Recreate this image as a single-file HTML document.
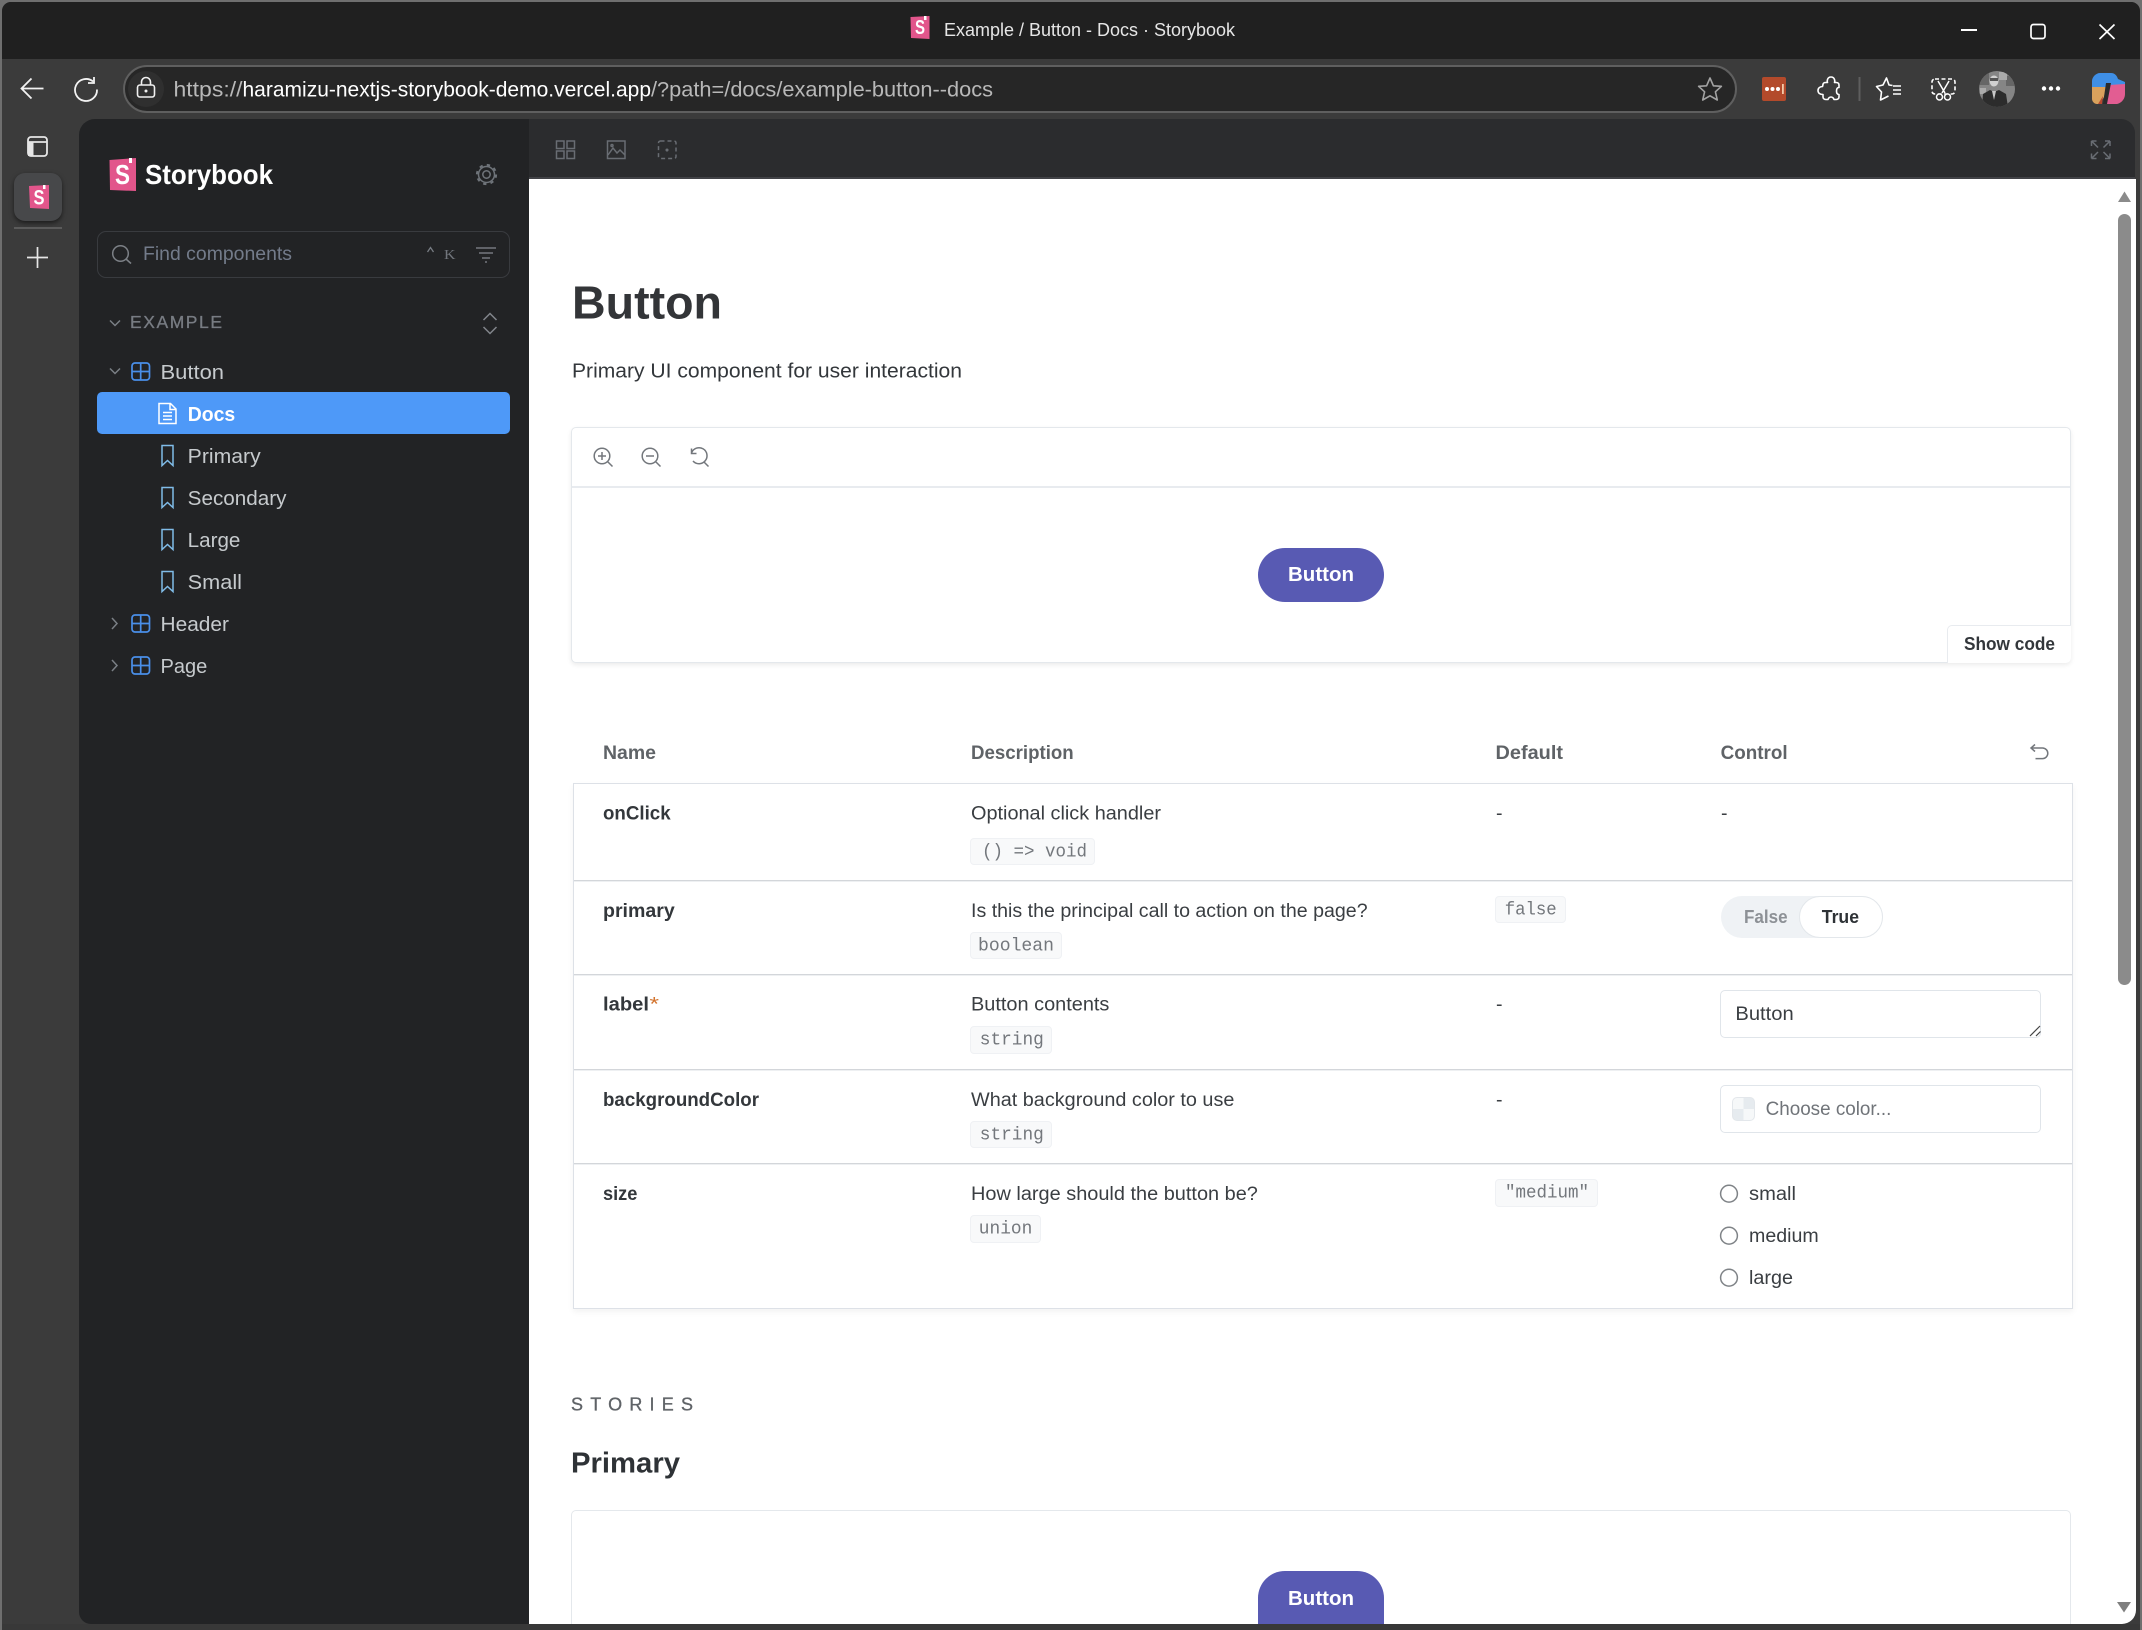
<!DOCTYPE html>
<html lang="en"><head><meta charset="utf-8"><title>Example / Button - Docs · Storybook</title>
<style>
html,body{margin:0;padding:0;width:2142px;height:1630px;overflow:hidden;background:#6f6f6f}
.a{position:absolute;box-sizing:border-box}
svg{position:absolute;left:0;top:0}
text{font-family:"Liberation Sans",sans-serif;white-space:pre}
.m{font-family:"Liberation Mono",monospace;font-size:18px;fill:#73777c}
.b{font-weight:700}
.d{font-size:19px;fill:#3a3e42}
.n{font-size:19px;font-weight:700;fill:#33373b}
.h{font-size:19px;font-weight:700;fill:#5f6367}
.s{font-size:20px;fill:#c6cacd}
.code{background:#f8f9fa;border:1px solid #eff1f4;border-radius:4px}
.inp{background:#fff;border:1.5px solid #e0e5ea;border-radius:5px}
.rl{left:574px;width:1498px;height:1px;background:#d3d6da;box-shadow:0 1px 0 #eef0f2}
</style></head><body>
<div class="a" style="left:2px;top:2px;width:2138px;height:1628px;background:#383838;border-radius:9px 9px 0 0"></div>
<div class="a" style="left:2px;top:2px;width:2138px;height:57px;background:#202020;border-radius:9px 9px 0 0"></div>
<div class="a" style="left:2px;top:59px;width:2138px;height:1565px;background:#3b3b3b"></div>
<div class="a" style="left:123px;top:65px;width:1614px;height:48px;background:#262626;border:2px solid #5f5f5f;border-radius:24px"></div>
<div class="a" style="left:128px;top:71px;width:36px;height:36px;background:#2f2f2f;border-radius:18px"></div>
<div class="a" style="left:14px;top:173px;width:48px;height:48px;background:#47484a;border-radius:11px;box-shadow:0 2px 5px rgba(0,0,0,.55)"></div>
<div class="a" style="left:14px;top:227px;width:48px;height:2px;background:#5b5b5b"></div>
<div class="a" style="left:79px;top:119px;width:450px;height:1505px;background:#222325;border-radius:16px 0 0 12px"></div>
<div class="a" style="left:529px;top:119px;width:1606px;height:60px;background:#2b2c2e;border-radius:0 14px 0 0;border-bottom:2px solid #414246"></div>
<div class="a" style="left:529px;top:179px;width:1607px;height:1445px;background:#fff;border-radius:0 0 14px 0;overflow:hidden"></div>
<div class="a" style="left:97px;top:231px;width:413px;height:47px;border:1.5px solid #393b3f;border-radius:9px"></div>
<div class="a" style="left:97px;top:392px;width:413px;height:42px;background:#4e99f8;border-radius:5px"></div>
<div class="a" style="left:571px;top:427px;width:1500px;height:236px;border:1.5px solid #e4e8ec;border-radius:5px;background:#fff;box-shadow:0 2px 5px rgba(0,0,0,.08)"></div>
<div class="a" style="left:572px;top:486px;width:1498px;height:2px;background:#e8ebef"></div>
<div class="a" style="left:1258px;top:548px;width:126px;height:54px;background:#585ab3;border-radius:27px"></div>
<div class="a" style="left:1947px;top:625px;width:124px;height:38px;border:1.5px solid #e8ebef;border-right:0;border-bottom:0;border-radius:5px 0 5px 0;background:#fff"></div>
<div class="a" style="left:573px;top:783px;width:1500px;height:526px;background:#fff;border:1.5px solid #dde1e7;box-shadow:0 3px 6px rgba(0,0,0,.05)"></div>
<div class="a rl" style="top:880px"></div>
<div class="a rl" style="top:974px"></div>
<div class="a rl" style="top:1069px"></div>
<div class="a rl" style="top:1163px"></div>
<div class="a code" style="left:970px;top:838px;width:125px;height:27px"></div>
<div class="a code" style="left:970px;top:932px;width:92px;height:27px"></div>
<div class="a code" style="left:970px;top:1026px;width:82px;height:28px"></div>
<div class="a code" style="left:970px;top:1121px;width:82px;height:27px"></div>
<div class="a code" style="left:970px;top:1215px;width:71px;height:28px"></div>
<div class="a code" style="left:1495px;top:896px;width:71px;height:27px"></div>
<div class="a code" style="left:1495px;top:1179px;width:103px;height:28px"></div>
<div class="a" style="left:1721px;top:896px;width:162px;height:42px;background:#eff2f5;border-radius:21px"></div>
<div class="a" style="left:1799px;top:896px;width:84px;height:42px;background:#fff;border:1.5px solid #e3e7eb;border-radius:21px"></div>
<div class="a inp" style="left:1720px;top:990px;width:321px;height:48px"></div>
<div class="a inp" style="left:1720px;top:1085px;width:321px;height:48px"></div>
<div class="a" style="left:1732px;top:1097px;width:23px;height:24px;border:1px solid #e3e7eb;border-radius:5px;background:conic-gradient(#e6ebef 0 25%,#f6f8f9 0 50%,#e6ebef 0 75%,#f6f8f9 0)"></div>
<div class="a" style="left:571px;top:1510px;width:1500px;height:114px;border:1.5px solid #e4e8ec;border-bottom:0;border-radius:5px 5px 0 0;background:#fff"></div>
<div class="a" style="left:1258px;top:1571px;width:126px;height:53px;background:#585ab3;border-radius:27px 27px 0 0"></div>
<div class="a" style="left:2118px;top:214px;width:13px;height:771px;background:#8b8b8b;border-radius:7px"></div>

<svg width="2142" height="1630" viewBox="0 0 2142 1630" xmlns="http://www.w3.org/2000/svg">
<!-- title bar -->
<polygon points="910.5,17 929.5,16 929.5,39 911,38" fill="#e2558b"/><rect x="924" y="16" width="2.5" height="4" fill="#fff"/>
<text x="915" y="34" font-size="20" font-weight="700" fill="#fff" textLength="10" lengthAdjust="spacingAndGlyphs">S</text>
<text x="944" y="36" font-size="18.5" fill="#e6e6e6" textLength="291" lengthAdjust="spacingAndGlyphs">Example / Button - Docs · Storybook</text>
<rect x="1961" y="29" width="16" height="2" fill="#fff"/>
<rect x="2031" y="24.5" width="14" height="14" rx="2.5" fill="none" stroke="#fff" stroke-width="1.7"/>
<path d="M2099.5 24.5 2114.5 39 M2114.5 24.5 2099.5 39" stroke="#fff" stroke-width="1.7" fill="none"/>
<!-- nav -->
<path d="M43.5 88.5H22 M31.5 78.5 21.5 88.5 31.5 98.5" stroke="#f2f2f2" stroke-width="1.8" fill="none"/>
<path d="M93 81.5a11 11 0 1 0 4 8" stroke="#f2f2f2" stroke-width="1.8" fill="none"/><path d="M94 77v6h-6" stroke="#f2f2f2" stroke-width="1.8" fill="none"/>
<rect x="137.5" y="85" width="17" height="12" rx="2.5" fill="none" stroke="#f0f0f0" stroke-width="1.6"/><path d="M141.5 85v-3a4.500 4.500 0 0 1 9 0v3" fill="none" stroke="#f0f0f0" stroke-width="1.6"/><circle cx="146" cy="91" r="1.5" fill="#f0f0f0"/>
<text x="173.5" y="96.5" font-size="21.5" fill="#b8b8b8" textLength="69" lengthAdjust="spacingAndGlyphs">https://</text>
<text x="242.5" y="96.5" font-size="21.5" fill="#fff" textLength="408.5" lengthAdjust="spacingAndGlyphs">haramizu-nextjs-storybook-demo.vercel.app</text>
<text x="651" y="96.5" font-size="21.5" fill="#b8b8b8" textLength="342" lengthAdjust="spacingAndGlyphs">/?path=/docs/example-button--docs</text>
<g transform="translate(1710,90)"><polygon points="0,-12 3.4,-4.2 11.4,-3.7 5.4,1.8 7.3,10 0,5.8 -7.3,10 -5.4,1.8 -11.4,-3.7 -3.4,-4.2" fill="none" stroke="#a3a3a3" stroke-width="1.6" stroke-linejoin="round"/></g>
<rect x="1762" y="77" width="24" height="24" rx="2" fill="#b34a2b"/>
<circle cx="1767" cy="89" r="2" fill="#fff"/><circle cx="1772.5" cy="89" r="2" fill="#fff"/><circle cx="1778" cy="89" r="2" fill="#fff"/><rect x="1782" y="84" width="1.8" height="10" fill="#f3c9a8"/>
<path d="M1823 84.500c0-1.500 1.500-2 3-2h1.500c-.5-1 -.5-5.500 3.500-5.500s4 4.500 3.500 5.500h1.500c1.500 0 3 .5 3 2.500v2.500c-2 0-2.500 2-2.500 3.500s.5 3.500 2.500 3.500v2.500c0 1.500-1.500 2.500-3 2.500h-2c-.5-1.500-1.500-2.500-3-2.500s-2.500 1-3 2.500h-2c-1.500 0-3-1-3-2.500v-2.500c-3 0-5-1.500-5-4s2-4 4.500-4z" fill="none" stroke="#fff" stroke-width="1.6" stroke-linejoin="round"/>
<rect x="1858.500" y="77" width="2" height="24" fill="#5e5e5e"/>
<path d="M1892.500 85.500l-3.500-.5-2.500-7-3.500 7-6.500 1.500 5 5.500-1 8 8-4" fill="none" stroke="#fff" stroke-width="1.6" stroke-linejoin="round"/>
<path d="M1893 86h8M1893 90h8M1893 94h8" stroke="#fff" stroke-width="1.6"/>
<rect x="1932" y="79" width="23" height="15" rx="3" fill="none" stroke="#fff" stroke-width="1.6" stroke-dasharray="4 2.500"/>
<path d="M1938 81l7 12M1949 81l-7 12" stroke="#fff" stroke-width="1.5"/><circle cx="1939.500" cy="97" r="3" fill="#3b3b3b" stroke="#fff" stroke-width="1.5"/><circle cx="1947.500" cy="97" r="3" fill="#3b3b3b" stroke="#fff" stroke-width="1.5"/>
<defs><clipPath id="av"><circle cx="1997" cy="89" r="18"/></clipPath></defs>
<g clip-path="url(#av)"><rect x="1979" y="71" width="36" height="36" fill="#858585"/><path d="M1979 71h10v14h-10zM2006 76h9v10h-9z" fill="#666"/><path d="M1999 72h8v8h-8zM1980 88h6v6h-6z" fill="#ababab"/><ellipse cx="1994" cy="81" rx="4.500" ry="5.500" fill="#d0d0d0"/><path d="M1990 78h8v3h-8z" fill="#555"/><path d="M1982 107l1-13 7-4 4 2 5-2 7 4 2 13z" fill="#2c2c2c"/><path d="M1992 91l2 9 2-9z" fill="#c8c8c8"/></g>
<circle cx="2044" cy="88.500" r="2.200" fill="#fff"/><circle cx="2051" cy="88.500" r="2.200" fill="#fff"/><circle cx="2058" cy="88.500" r="2.200" fill="#fff"/>
<path d="M2100 73h11c4 0 6 3 7 6l7 3v4l-17 1-16 1v-7c0-4 4-8 8-8z" fill="#3f8fe6"/>
<path d="M2092 87h14l-2 10-4 7h-3c-3 0-5-3-5-5z" fill="#d9a15c"/>
<path d="M2109 85l16-1v10c0 6-5 10-9 10h-11z" fill="#e25d92"/>
<path d="M2106 83h5l-4 21h-4z" fill="#2a2a2a"/><path d="M2103 96l-1 8h-4z" fill="#b8492f"/>
<!-- left strip -->
<rect x="28" y="137" width="19" height="19" rx="3" fill="none" stroke="#e6e6e6" stroke-width="1.800"/><path d="M28 142h19" stroke="#e6e6e6" stroke-width="1.800"/><rect x="28" y="142" width="5.500" height="14" fill="#e6e6e6"/>
<polygon points="29,186 49,185 49,209 30,208" fill="#e2558b"/><rect x="43" y="185" width="2.500" height="4" fill="#fff"/>
<text x="33.500" y="204.500" font-size="21" font-weight="700" fill="#fff" textLength="11" lengthAdjust="spacingAndGlyphs">S</text>
<path d="M27 257.500h21 M37.500 247v21" stroke="#e6e6e6" stroke-width="1.700"/>
<!-- sidebar head -->
<polygon points="109.500,160 136,158 136,191 110,190" fill="#e2558b"/><rect x="129" y="158" width="3" height="5" fill="#fff"/>
<text x="115" y="184" font-size="28" font-weight="700" fill="#fff" textLength="15" lengthAdjust="spacingAndGlyphs">S</text>
<text x="145" y="184" font-size="27.500" font-weight="700" fill="#fff" textLength="128" lengthAdjust="spacingAndGlyphs">Storybook</text>
<circle cx="486.500" cy="174.500" r="3.700" fill="none" stroke="#6f747a" stroke-width="1.500"/><circle cx="486.500" cy="174.500" r="8" fill="none" stroke="#6f747a" stroke-width="1.500"/><circle cx="486.500" cy="174.500" r="9.600" fill="none" stroke="#6f747a" stroke-width="2" stroke-dasharray="3.300 4.240"/>
<circle cx="120.500" cy="253.500" r="7.800" fill="none" stroke="#7c8086" stroke-width="1.500"/><path d="M126 259l5 4.500" stroke="#7c8086" stroke-width="1.600"/>
<text x="143" y="260" font-size="19" fill="#737b8a" textLength="149" lengthAdjust="spacingAndGlyphs">Find components</text>
<path d="M427.500 252l3-4.500 3 4.500" fill="none" stroke="#777c83" stroke-width="1.300"/>
<text x="444" y="259" font-size="14" style="font-family:'Liberation Serif',serif" fill="#72767d" textLength="11.500" lengthAdjust="spacingAndGlyphs">K</text>
<path d="M476 248h20M479 253h14M482 258h8M485 262h2" stroke="#74787e" stroke-width="1.500"/>
<!-- tree -->
<path d="M110 320.500l5 5 5-5" fill="none" stroke="#7a7f85" stroke-width="1.500"/>
<text x="130" y="328" font-size="17.500" fill="#787c83" stroke="#787c83" stroke-width=".3" textLength="92" lengthAdjust="spacing">EXAMPLE</text>
<path d="M483.500 320l6.500-6.500 6.500 6.500 M483.500 327l6.500 6.500 6.500-6.500" fill="none" stroke="#81858b" stroke-width="1.500"/>
<path d="M110 368.500l5 5 5-5" fill="none" stroke="#7a7f85" stroke-width="1.500"/>
<g fill="none" stroke="#4a8fe9" stroke-width="1.700"><rect x="132" y="363" width="17.500" height="17" rx="3"/><path d="M140.700 363v17M132 371.500h17.500"/>
<rect x="132" y="615" width="17.500" height="17" rx="3"/><path d="M140.700 615v17M132 623.500h17.500"/>
<rect x="132" y="657" width="17.500" height="17" rx="3"/><path d="M140.700 657v17M132 665.500h17.500"/></g>
<text x="160.500" y="379" class="s" textLength="63.500" lengthAdjust="spacingAndGlyphs">Button</text>
<path d="M159 403.500h11.500l5.500 5.500v14.500h-17z M170 403.500v6h6 M163 412.500h9M163 416h9M163 419.500h9" fill="none" stroke="#fff" stroke-width="1.500"/>
<text x="187.700" y="421" font-size="20" font-weight="700" fill="#fff" textLength="47.500" lengthAdjust="spacingAndGlyphs">Docs</text>
<g fill="none" stroke="#80bce8" stroke-width="1.500">
<path d="M162 445.500h11v20l-5.500-5-5.500 5z"/><path d="M162 487.500h11v20l-5.500-5-5.500 5z"/><path d="M162 529.500h11v20l-5.500-5-5.500 5z"/><path d="M162 571.500h11v20l-5.500-5-5.500 5z"/></g>
<text x="187.700" y="463" class="s" textLength="73" lengthAdjust="spacingAndGlyphs">Primary</text>
<text x="187.700" y="505" class="s" textLength="98.800" lengthAdjust="spacingAndGlyphs">Secondary</text>
<text x="187.700" y="547" class="s" textLength="52.700" lengthAdjust="spacingAndGlyphs">Large</text>
<text x="187.700" y="589" class="s" textLength="54.300" lengthAdjust="spacingAndGlyphs">Small</text>
<path d="M112 618l5 5.500-5 5.500 M112 660l5 5.500-5 5.500" fill="none" stroke="#7a7f85" stroke-width="1.500"/>
<text x="160.500" y="631" class="s" textLength="68.500" lengthAdjust="spacingAndGlyphs">Header</text>
<text x="160.500" y="673" class="s" textLength="46.800" lengthAdjust="spacingAndGlyphs">Page</text>
<!-- panel toolbar -->
<g fill="none" stroke="#696d73" stroke-width="1.500">
<rect x="556.500" y="141" width="7.500" height="7.500"/><rect x="567" y="141" width="7.500" height="7.500"/><rect x="556.500" y="151" width="7.500" height="7.500"/><rect x="567" y="151" width="7.500" height="7.500"/>
<rect x="607.500" y="141" width="17.500" height="17.500"/><path d="M608 155l5-7 4 5 3-3 5 5"/><circle cx="612" cy="145.500" r="1"/>
<rect x="658.500" y="141" width="17.500" height="17.500" rx="2" stroke-dasharray="4 3"/><circle cx="667" cy="150" r=".8"/>
<path d="M2091.500 141h5M2091.500 141v5M2091.500 141l6.500 6.500M2110 141h-5M2110 141v5M2110 141l-6.500 6.500M2091.500 158.500h5M2091.500 158.500v-5M2091.500 158.500l6.500-6.500M2110 158.500h-5M2110 158.500v-5M2110 158.500l-6.500-6.500"/>
</g>
<!-- docs header -->
<text x="572" y="318.500" font-size="46.500" font-weight="700" fill="#333538" textLength="150" lengthAdjust="spacingAndGlyphs">Button</text>
<text x="572" y="377.700" font-size="20.500" fill="#33373b" textLength="390" lengthAdjust="spacingAndGlyphs">Primary UI component for user interaction</text>
<!-- preview toolbar -->
<g fill="none" stroke="#73777c" stroke-width="1.500">
<circle cx="602" cy="456" r="7.800"/><path d="M607.500 461.500l5 5M598 456h8M602 452v8"/>
<circle cx="650" cy="456" r="7.800"/><path d="M655.500 461.500l5 5M646 456h8"/>
<path d="M691.500 453a8 8 0 1 1 1.500 8M691.500 448.500v5h5M703.500 461.500l5 5"/>
</g>
<text x="1288" y="581" font-size="20" font-weight="700" fill="#fff" textLength="66" lengthAdjust="spacingAndGlyphs">Button</text>
<text x="1964" y="650" font-size="18.500" font-weight="700" fill="#33373b" textLength="91" lengthAdjust="spacingAndGlyphs">Show code</text>
<!-- table head -->
<text x="603" y="759" class="h" textLength="53" lengthAdjust="spacingAndGlyphs">Name</text>
<text x="971" y="759" class="h" textLength="102.700" lengthAdjust="spacingAndGlyphs">Description</text>
<text x="1495.500" y="759" class="h" textLength="67.500" lengthAdjust="spacingAndGlyphs">Default</text>
<text x="1720.600" y="759" class="h" textLength="67" lengthAdjust="spacingAndGlyphs">Control</text>
<path d="M2035 744.500l-4 3.500 4 3.500M2031 748h11.500a5.300 5.300 0 0 1 0 10.600h-7" fill="none" stroke="#73777c" stroke-width="1.500"/>
<!-- rows -->
<text x="603" y="819.500" class="n" textLength="67.600" lengthAdjust="spacingAndGlyphs">onClick</text>
<text x="971" y="819.500" class="d" textLength="190" lengthAdjust="spacingAndGlyphs">Optional click handler</text>
<text x="982" y="856.500" class="m" textLength="105" lengthAdjust="spacingAndGlyphs">() =&gt; void</text>
<text x="1496" y="819.500" class="d" textLength="6.500" lengthAdjust="spacingAndGlyphs">-</text>
<text x="1721" y="819.500" class="d" textLength="6.500" lengthAdjust="spacingAndGlyphs">-</text>
<text x="603" y="917" class="n" textLength="71.700" lengthAdjust="spacingAndGlyphs">primary</text>
<text x="971" y="917" class="d" textLength="396.600" lengthAdjust="spacingAndGlyphs">Is this the principal call to action on the page?</text>
<text x="978" y="950.500" class="m" textLength="76" lengthAdjust="spacingAndGlyphs">boolean</text>
<text x="1504.700" y="914.500" class="m" textLength="52" lengthAdjust="spacingAndGlyphs">false</text>
<text x="1744" y="923" font-size="18.500" font-weight="700" fill="#8d9196" textLength="43.600" lengthAdjust="spacingAndGlyphs">False</text>
<text x="1821.800" y="923" font-size="18.500" font-weight="700" fill="#2e3236" textLength="37.200" lengthAdjust="spacingAndGlyphs">True</text>
<text x="603" y="1010.500" class="n" textLength="46" lengthAdjust="spacingAndGlyphs">label</text>
<text x="649.500" y="1010.500" font-size="19" fill="#d2722c" textLength="9.500" lengthAdjust="spacingAndGlyphs">*</text>
<text x="971" y="1010.500" class="d" textLength="138.400" lengthAdjust="spacingAndGlyphs">Button contents</text>
<text x="979.800" y="1044.500" class="m" textLength="64" lengthAdjust="spacingAndGlyphs">string</text>
<text x="1496" y="1010.500" class="d" textLength="6.500" lengthAdjust="spacingAndGlyphs">-</text>
<text x="1735.400" y="1020" class="d" textLength="58.300" lengthAdjust="spacingAndGlyphs">Button</text>
<path d="M2030 1036l10-10M2036 1036l4.500-4.500" stroke="#444" stroke-width="1.200"/>
<text x="603" y="1105.800" class="n" textLength="156" lengthAdjust="spacingAndGlyphs">backgroundColor</text>
<text x="971" y="1105.800" class="d" textLength="263.400" lengthAdjust="spacingAndGlyphs">What background color to use</text>
<text x="979.800" y="1139.500" class="m" textLength="64" lengthAdjust="spacingAndGlyphs">string</text>
<text x="1496" y="1105.800" class="d" textLength="6.500" lengthAdjust="spacingAndGlyphs">-</text>
<text x="1765.600" y="1115" font-size="19" fill="#707479" textLength="125.800" lengthAdjust="spacingAndGlyphs">Choose color...</text>
<text x="603" y="1200" class="n" textLength="34.400" lengthAdjust="spacingAndGlyphs">size</text>
<text x="971" y="1200" class="d" textLength="286.900" lengthAdjust="spacingAndGlyphs">How large should the button be?</text>
<text x="978.800" y="1233.500" class="m" textLength="53.500" lengthAdjust="spacingAndGlyphs">union</text>
<text x="1505" y="1197.300" class="m" textLength="84" lengthAdjust="spacingAndGlyphs">"medium"</text>
<g fill="#fff" stroke="#7f8387" stroke-width="1.500"><circle cx="1729" cy="1193.700" r="8.400"/><circle cx="1729" cy="1235.700" r="8.400"/><circle cx="1729" cy="1277.700" r="8.400"/></g>
<text x="1749" y="1200" class="d" textLength="47" lengthAdjust="spacingAndGlyphs">small</text>
<text x="1749" y="1242" class="d" textLength="69.700" lengthAdjust="spacingAndGlyphs">medium</text>
<text x="1749" y="1284" class="d" textLength="44" lengthAdjust="spacingAndGlyphs">large</text>
<!-- stories -->
<text x="571" y="1410.700" font-size="18" fill="#5f6367" stroke="#5f6367" stroke-width=".3" textLength="122" lengthAdjust="spacing">STORIES</text>
<text x="571" y="1472.700" font-size="28.500" font-weight="700" fill="#2e3236" textLength="109" lengthAdjust="spacingAndGlyphs">Primary</text>
<text x="1288" y="1605" font-size="20" font-weight="700" fill="#fff" textLength="66" lengthAdjust="spacingAndGlyphs">Button</text>
<!-- scrollbar arrows -->
<path d="M2124.500 191.500l6.500 10.500h-13z" fill="#8b8b8b"/>
<path d="M2117 1602h14l-7 10.500z" fill="#7f7f7f"/>
</svg>
</body></html>
